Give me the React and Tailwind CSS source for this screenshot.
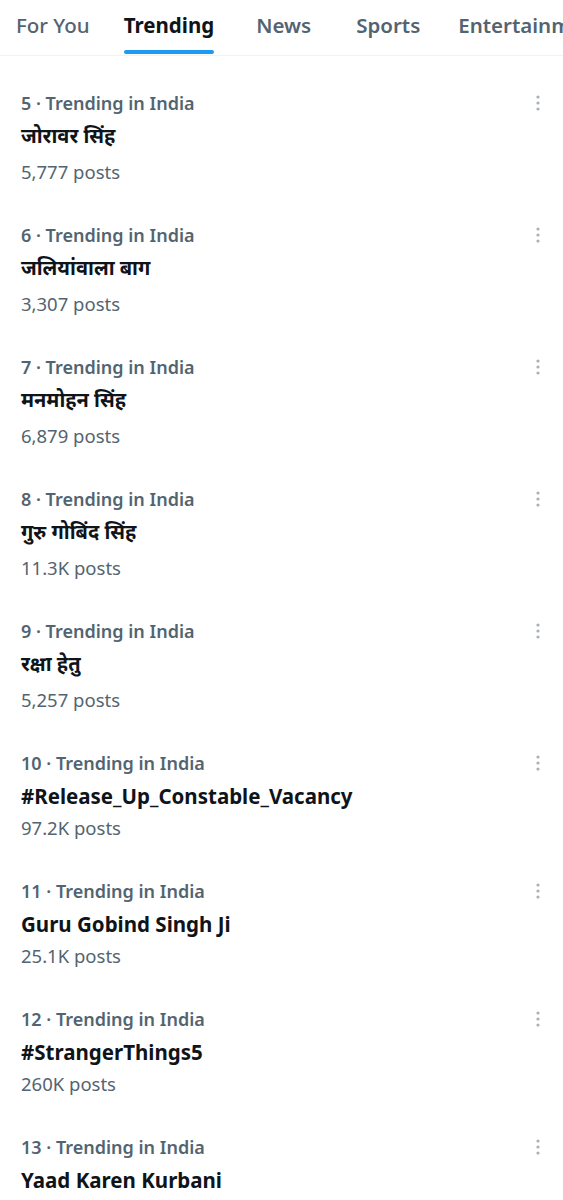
import React from "react";

const items = [
  { n: 5, title: "जोरावर सिंह", posts: "5,777 posts", dev: true },
  { n: 6, title: "जलियांवाला बाग", posts: "3,307 posts", dev: true },
  { n: 7, title: "मनमोहन सिंह", posts: "6,879 posts", dev: true },
  { n: 8, title: "गुरु गोबिंद सिंह", posts: "11.3K posts", dev: true },
  { n: 9, title: "रक्षा हेतु", posts: "5,257 posts", dev: true },
  { n: 10, title: "#Release_Up_Constable_Vacancy", posts: "97.2K posts", dev: false },
  { n: 11, title: "Guru Gobind Singh Ji", posts: "25.1K posts", dev: false },
  { n: 12, title: "#StrangerThings5", posts: "260K posts", dev: false },
  { n: 13, title: "Yaad Karen Kurbani", posts: "", dev: false },
];

function Dots() {
  return (
    <svg width="6" height="18" viewBox="0 0 6 18" className="absolute right-[22px] top-[24px]">
      <circle cx="3" cy="3" r="1.6" fill="#a8b1b9" />
      <circle cx="3" cy="9" r="1.6" fill="#a8b1b9" />
      <circle cx="3" cy="15" r="1.6" fill="#a8b1b9" />
    </svg>
  );
}

export default function App() {
  return (
    <div className="w-[563px] h-[1200px] overflow-hidden bg-white" style={{ fontFamily: '"Noto Sans", "Noto Sans Devanagari", sans-serif' }}>
      <div className="h-[56px] border-b border-[#eff3f4] flex items-stretch whitespace-nowrap overflow-hidden text-[20.5px] pb-[4px]">
        <div className="ml-[16px] flex items-center text-[#536471] font-medium">For You</div>
        <div className="ml-[34px] relative flex items-center text-[#0f1419] font-bold">
          Trending
          <div className="absolute left-0 right-0 bottom-[-3px] h-[4px] rounded-full bg-[#1d9bf0]" />
        </div>
        <div className="ml-[42px] flex items-center text-[#536471] font-semibold">News</div>
        <div className="ml-[45px] flex items-center text-[#536471] font-semibold">Sports</div>
        <div className="ml-[38px] flex items-center text-[#536471] font-semibold">Entertainment</div>
      </div>
      <div className="pt-[14px]">
        {items.map((it) => (
          <div key={it.n} className="relative px-[21px] pt-[19px] pb-[16px]">
            <Dots />
            <div className="text-[18px] leading-[28px] font-semibold text-[#536471]">{it.n} · Trending in India</div>
            <div className={`font-bold text-[#0f1419] whitespace-nowrap ${it.dev ? "text-[20px] leading-[34px] mt-[2px]" : "text-[20.5px] leading-[28px] mt-[5px]"}`}>{it.title}</div>
            <div className={`${it.dev ? "mt-[5px]" : "mt-[4px]"} text-[18.5px] leading-[28px] text-[#536471]`}>{it.posts}</div>
          </div>
        ))}
      </div>
    </div>
  );
}
